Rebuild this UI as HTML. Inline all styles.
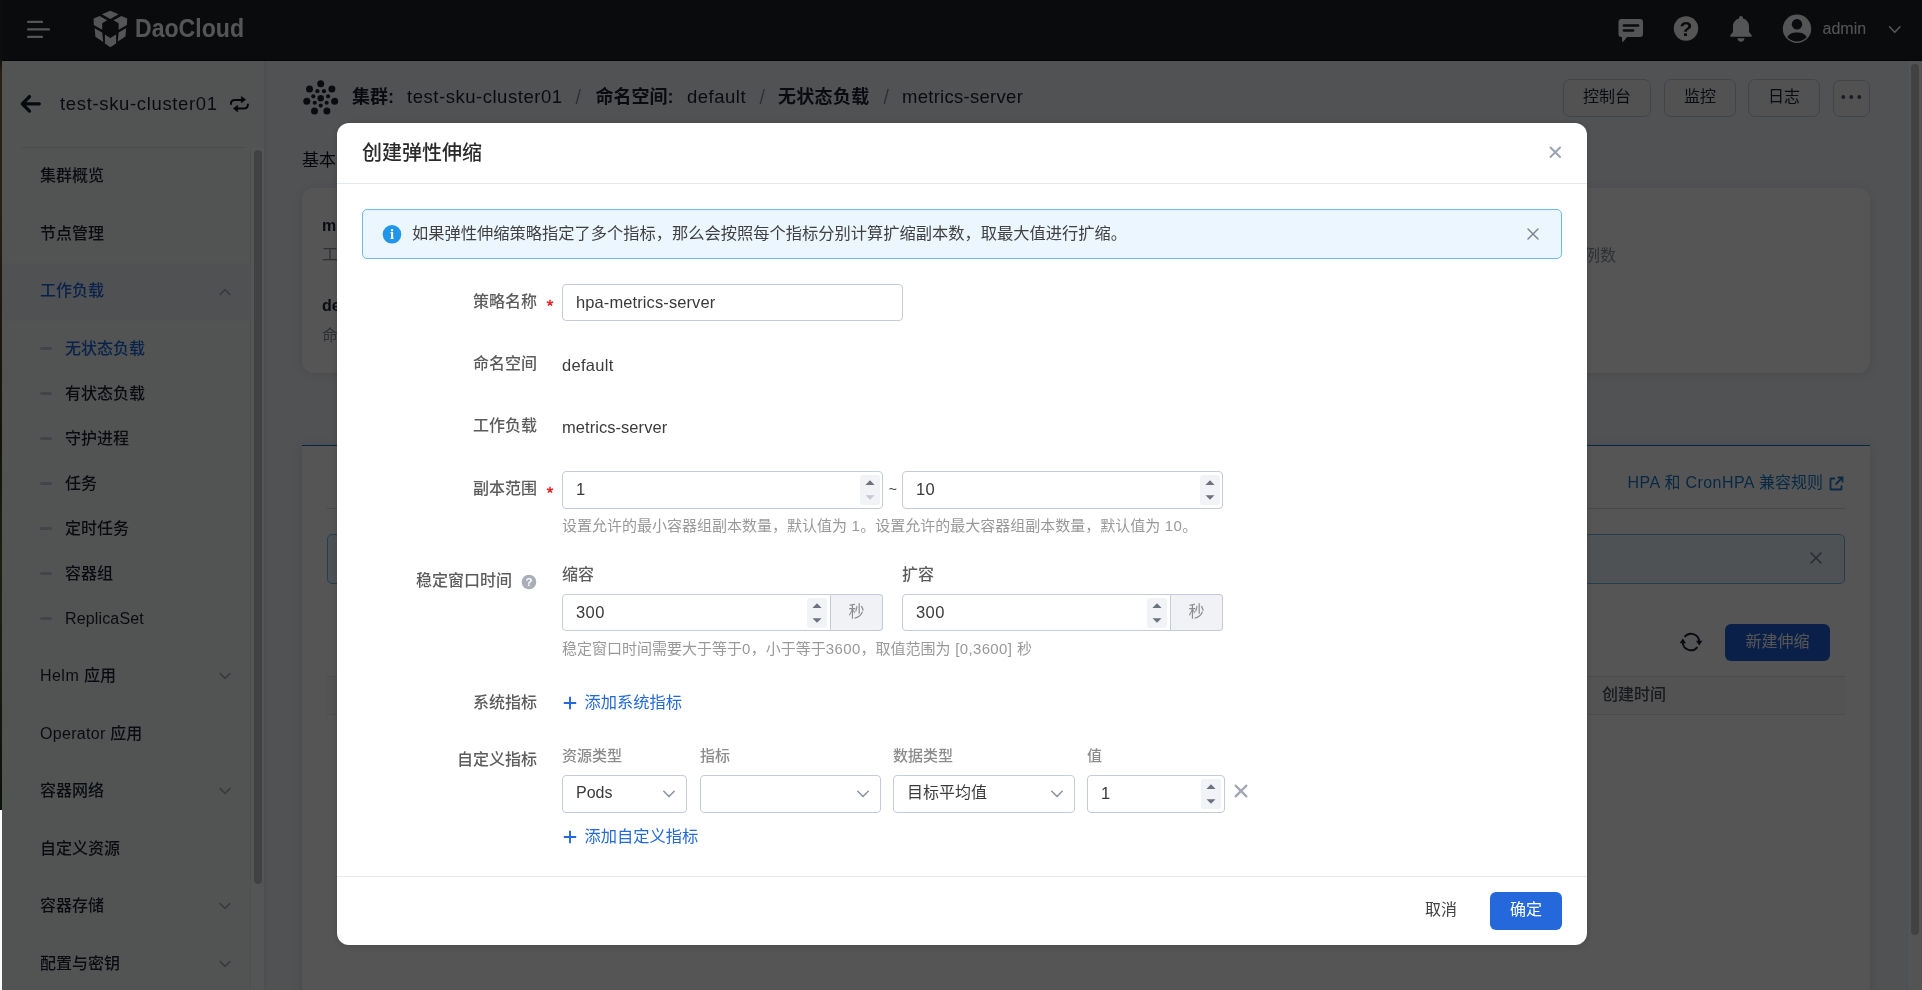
<!DOCTYPE html>
<html lang="zh-CN">
<head>
<meta charset="utf-8">
<title>创建弹性伸缩</title>
<style>
*{box-sizing:border-box;margin:0;padding:0}
html,body{width:1922px;height:990px;overflow:hidden;background:#fff}
body{font-family:"Liberation Sans","Noto Sans CJK SC",sans-serif;color:#1b2332;font-size:16px;position:relative}
.abs{position:absolute}
#hdr,#side,#content,#mc{will-change:transform}
#strip{position:absolute;left:0;top:0;width:2px;height:990px;background:#fff;z-index:50}
#strip i{position:absolute;left:0;top:0;width:2px;height:809.500px;background:linear-gradient(#0d0d0d 0,#0d0d0d 7%,#2a1f14 9%,#2a1d12 25%,#1c160f 40%,#141208 55%,#1a2010 70%,#141a0e 85%,#0a100a 100%)}
#page{position:absolute;left:0;top:0;width:1922px;height:990px;overflow:hidden;background:#f3f5fb}
/* header */
#hdr{position:absolute;left:0;top:0;width:1922px;height:60px;background:#1e2128;z-index:5;box-shadow:0 1px 0 #0b0c10}
/* sidebar */
#side{position:absolute;left:0;top:60px;width:264px;height:930px;background:#f7fcfa;box-shadow:1px 0 2px rgba(0,0,0,.07)}
.mi{position:absolute;margin-top:1px;left:40px;font-size:16px;font-weight:500;color:#1b2332;white-space:nowrap;line-height:24px}
.si{position:absolute;margin-top:1px;left:65px;font-size:16px;font-weight:500;color:#1b2332;white-space:nowrap;line-height:24px}
.dash{position:absolute;left:40px;width:12px;height:3px;background:#c5ccda;border-radius:1.500px;margin-top:-.500px}
.chev{position:absolute;left:218.500px;width:12px;height:8px}
/* overlay */
#mask{position:absolute;left:0;top:0;width:1922px;height:990px;background:rgba(0,0,0,.665);z-index:10}
/* modal */
#modal{position:absolute;left:337px;top:123px;width:1250px;height:822px;background:#fff;border-radius:12px;z-index:20;box-shadow:0 1px 8px rgba(0,0,0,.14)}
.lbl{position:absolute;font-size:16px;line-height:24px;color:#5c5c5c;font-weight:500;white-space:nowrap;text-align:right}
.val{position:absolute;font-size:16.5px;line-height:24px;color:#3c3c3c;white-space:nowrap}
.inp{position:absolute;height:37px;border:1px solid #c5cad9;border-radius:4px;background:#fff}
.inp span{position:absolute;left:13px;top:6px;font-size:16px;line-height:24px;color:#3a3a3a}
.ls{letter-spacing:.370px}
.inp span.n{font-size:16.500px;letter-spacing:.400px;top:5.300px}
.num span.n{top:4.800px}
.num{height:38px}
.sel{height:38px}
.sel span{top:4.500px}
.help{position:absolute;font-size:15px;line-height:20px;color:#999;white-space:nowrap}
.lnk{position:absolute;font-size:16.250px;line-height:24px;color:#2468d9;white-space:nowrap}
.req{position:absolute;color:#e02c2c;font-size:14px;line-height:24px}
</style>
</head>
<body>
<div id="strip"><i></i></div>
<div id="page">
<!--HEADER-->
<div id="hdr">
<svg class="abs" style="left:0;top:0" width="1922" height="60" viewBox="0 0 1922 60">
<g fill="#ffffff">
<rect x="27" y="20.700" width="16" height="2.400" rx="1.200"/><rect x="27" y="28.200" width="23" height="2.400" rx="1.200"/><rect x="27" y="35.700" width="16" height="2.400" rx="1.200"/>
<polygon points="110.25,10.8 118.6,14.3 110.25,18.9 101.9,14.3"/>
<polygon points="93.6,18.4 99.6,15.9 107.2,20.2 102.2,23.2 102.2,29.7 93.8,24.9"/>
<polygon points="127.2,18.4 121.4,15.9 113.5,20.2 118.6,23.2 118.6,29.7 126.9,24.9"/>
<polygon points="94.6,28.2 102.2,32.5 103.2,42.1 95.4,36.8"/>
<polygon points="126.2,28.2 118.6,32.5 117.8,41.6 125.4,36.6"/>
<polygon points="104.9,34.5 110.25,38.1 116.1,34.5 116.1,43.6 110.25,47.2 104.9,43.6"/>
</g>
<text x="135" y="37.2" font-family="Liberation Sans, sans-serif" font-weight="700" font-size="26.5" fill="#fff" textLength="109" lengthAdjust="spacingAndGlyphs">DaoCloud</text>
<!-- chat -->
<g fill="#fff">
<path d="M1621.5 19h18.5a3 3 0 0 1 3 3v12a3 3 0 0 1 -3 3h-13l-3.6 4.6c-.6.7-1.4.3-1.4-.5v-4.1h-.5a3 3 0 0 1 -3 -3v-12a3 3 0 0 1 3 -3z"/>
</g>
<g stroke="#1e2128" stroke-width="2.700" stroke-linecap="round"><line x1="1624" y1="25.5" x2="1638" y2="25.5"/><line x1="1624" y1="30.5" x2="1633" y2="30.5"/></g>
<!-- help -->
<circle cx="1686" cy="28.5" r="12.2" fill="#fff"/>
<text x="1686" y="36.200" text-anchor="middle" font-family="Liberation Sans, sans-serif" font-weight="700" font-size="21" fill="#1e2128">?</text>
<!-- bell -->
<path fill="#fff" d="M1741 16c1.1 0 2 .9 2 2v.6c3.700 .9 6 4.100 6 8v5.400l2.700 3.200c.5.600.1 1.500-.7 1.500h-20c-.8 0-1.200-.9-.7-1.500l2.700-3.200v-5.400c0-3.900 2.300-7.100 6-8v-.6c0-1.100.9-2 2-2zM1737.500 38.300h7c0 1.900-1.600 3.500-3.500 3.500s-3.500-1.600-3.500-3.500z"/>
<!-- avatar -->
<circle cx="1797" cy="28.800" r="14.200" fill="#fff"/>
<circle cx="1797" cy="24.300" r="5.200" fill="#1e2128"/>
<path fill="#1e2128" d="M1787.300 37.200c1.600-3.300 5.400-4.700 9.700-4.700s8.100 1.400 9.700 4.700c-2.400 2.600-5.900 4.200-9.700 4.200s-7.300-1.600-9.700-4.200z"/>
<text x="1822.500" y="34.300" font-family="Liberation Sans, sans-serif" font-size="16" fill="#fff">admin</text>
<polyline points="1889.500,26.800 1894.750,32.300 1900,26.800" fill="none" stroke="#fff" stroke-width="1.600" stroke-linecap="round" stroke-linejoin="round"/>
</svg>
</div>
<!--SIDEBAR-->
<div id="side">
<svg class="abs" style="left:0;top:0" width="264" height="100" viewBox="0 60 264 100"><g fill="none" stroke="#141b2b" stroke-width="3.300" stroke-linecap="round" stroke-linejoin="round"><path d="M39.300 103.800H22.600M29.500 96.600L22.300 103.800l7.200 7.300"/></g><g fill="none" stroke="#10141c" stroke-width="2" stroke-linecap="round" stroke-linejoin="round"><path d="M230.900 104C230.900 101 232.500 100 235 100H241.500M247.900 104.500C247.900 107.500 246.200 108.500 243.700 108.500H237.500"/></g><g fill="#10141c" stroke="#10141c" stroke-width=".600" stroke-linejoin="round"><polygon points="241.300,96.400 245.700,99.600 241.300,102.900"/><polygon points="237.700,105.200 233.400,108.500 237.700,111.900"/></g></svg>
<div class="abs" style="left:60px;top:32px;font-size:18.500px;line-height:24px;letter-spacing:.650px;color:#1b2332;white-space:nowrap">test-sku-cluster01</div>
<div class="abs" style="left:21px;top:87px;width:225px;height:1px;background:#e0e3ec"></div>
<div class="abs" style="left:0;top:203px;width:250px;height:58px;background:#eff3fa"></div>
<div class="mi" style="top:103px">集群概览</div>
<div class="mi" style="top:161px">节点管理</div>
<div class="mi" style="top:218px;color:#2068de">工作负载</div>
<svg class="chev" style="top:227.8px" viewBox="0 0 12 8"><polyline points="1.200,6.400 6,1.600 10.800,6.400" fill="none" stroke="#a6adba" stroke-width="1.600" stroke-linecap="round" stroke-linejoin="round"/></svg>
<div class="mi" style="top:603px"><span style="letter-spacing:.460px">Helm </span>应用</div>
<svg class="chev" style="top:612.3px" viewBox="0 0 12 8"><polyline points="1.200,1.600 6,6.400 10.800,1.600" fill="none" stroke="#a6adba" stroke-width="1.600" stroke-linecap="round" stroke-linejoin="round"/></svg>
<div class="mi" style="top:661px"><span style="letter-spacing:.300px">Operator </span>应用</div>
<div class="mi" style="top:718px">容器网络</div>
<svg class="chev" style="top:727.3px" viewBox="0 0 12 8"><polyline points="1.200,1.600 6,6.400 10.800,1.600" fill="none" stroke="#a6adba" stroke-width="1.600" stroke-linecap="round" stroke-linejoin="round"/></svg>
<div class="mi" style="top:776px">自定义资源</div>
<div class="mi" style="top:833px">容器存储</div>
<svg class="chev" style="top:842.3px" viewBox="0 0 12 8"><polyline points="1.200,1.600 6,6.400 10.800,1.600" fill="none" stroke="#a6adba" stroke-width="1.600" stroke-linecap="round" stroke-linejoin="round"/></svg>
<div class="mi" style="top:891px">配置与密钥</div>
<svg class="chev" style="top:899.8px" viewBox="0 0 12 8"><polyline points="1.200,1.600 6,6.400 10.800,1.600" fill="none" stroke="#a6adba" stroke-width="1.600" stroke-linecap="round" stroke-linejoin="round"/></svg>
<div class="dash" style="top:287px"></div>
<div class="si" style="top:276px;color:#2068de">无状态负载</div>
<div class="dash" style="top:332px"></div>
<div class="si" style="top:321px">有状态负载</div>
<div class="dash" style="top:377.3px"></div>
<div class="si" style="top:366.3px">守护进程</div>
<div class="dash" style="top:422px"></div>
<div class="si" style="top:411px">任务</div>
<div class="dash" style="top:467px"></div>
<div class="si" style="top:456px">定时任务</div>
<div class="dash" style="top:512.3px"></div>
<div class="si" style="top:501.3px">容器组</div>
<div class="dash" style="top:557px"></div>
<div class="si" style="top:546px"><span style="letter-spacing:.150px">ReplicaSet</span></div>
<div class="abs" style="left:250px;top:88px;width:14px;height:842px;background:#fefefe;border-left:1px solid #ececec"></div>
<div class="abs" style="left:254px;top:90px;width:8px;height:734px;border-radius:4px;background:#c4c4c4"></div>
</div>
<!--CONTENT-->
<div id="content" class="abs" style="left:0;top:0;width:1922px;height:990px;white-space:nowrap">
<svg class="abs" style="left:300px;top:76px" width="42" height="44" viewBox="300 76 42 44" fill="#1b2332"><circle cx="320.70" cy="83.70" r="3.500"/><circle cx="331.88" cy="89.08" r="3.500"/><circle cx="334.64" cy="101.18" r="3.500"/><circle cx="326.90" cy="110.88" r="3.500"/><circle cx="314.50" cy="110.88" r="3.500"/><circle cx="306.76" cy="101.18" r="3.500"/><circle cx="309.52" cy="89.08" r="3.500"/><circle cx="320.70" cy="105.60" r="2.100"/><circle cx="314.76" cy="102.74" r="2.100"/><circle cx="313.29" cy="96.31" r="2.100"/><circle cx="317.40" cy="91.15" r="2.100"/><circle cx="324.00" cy="91.15" r="2.100"/><circle cx="328.11" cy="96.31" r="2.100"/><circle cx="326.64" cy="102.74" r="2.100"/><circle cx="320.70" cy="98.30" r="3.200"/></svg>
<div class="abs" style="left:352px;top:85px;font-size:18px;line-height:24px;font-weight:700;letter-spacing:0px;color:#1b2332">集群:</div>
<div class="abs" style="left:407px;top:85px;font-size:18.5px;line-height:24px;letter-spacing:.53px;color:#1b2332">test-sku-cluster01</div>
<div class="abs" style="left:575.5px;top:85px;font-size:19.5px;line-height:24px;letter-spacing:0px;color:#8e94a2">/</div>
<div class="abs" style="left:595.5px;top:85px;font-size:18px;line-height:24px;font-weight:700;letter-spacing:0px;color:#1b2332">命名空间:</div>
<div class="abs" style="left:687px;top:85px;font-size:18.5px;line-height:24px;letter-spacing:0.5px;color:#1b2332">default</div>
<div class="abs" style="left:759.5px;top:85px;font-size:19.5px;line-height:24px;letter-spacing:0px;color:#8e94a2">/</div>
<div class="abs" style="left:778px;top:85px;font-size:18px;line-height:24px;font-weight:700;letter-spacing:0.3px;color:#1b2332">无状态负载</div>
<div class="abs" style="left:883.5px;top:85px;font-size:19.5px;line-height:24px;letter-spacing:0px;color:#8e94a2">/</div>
<div class="abs" style="left:902px;top:85px;font-size:18.5px;line-height:24px;letter-spacing:0.28px;color:#1b2332">metrics-server</div>
<div class="abs" style="left:1563px;top:79px;width:88px;height:38px;border:1px solid #c6cbd6;border-radius:7px;background:#f5f7fa;text-align:center;font-size:16px;line-height:34px;color:#1b2332">控制台</div>
<div class="abs" style="left:1664px;top:79px;width:72px;height:38px;border:1px solid #c6cbd6;border-radius:7px;background:#f5f7fa;text-align:center;font-size:16px;line-height:34px;color:#1b2332">监控</div>
<div class="abs" style="left:1748px;top:79px;width:72px;height:38px;border:1px solid #c6cbd6;border-radius:7px;background:#f5f7fa;text-align:center;font-size:16px;line-height:34px;color:#1b2332">日志</div>
<div class="abs" style="left:1833px;top:80px;width:37px;height:37px;border:1px solid #c6cbd6;border-radius:7px;background:#f5f7fa"></div>
<svg class="abs" style="left:1838px;top:92px" width="28" height="10" viewBox="0 0 28 10" fill="#4a5160"><circle cx="5.300" cy="5" r="1.900"/><circle cx="13.300" cy="5" r="1.900"/><circle cx="21.300" cy="5" r="1.900"/></svg>
<div class="abs" style="left:302px;top:149px;font-size:17px;line-height:24px;font-weight:400;color:#10141c">基本信息</div>
<div class="abs" style="left:302px;top:188px;width:1568px;height:185px;border-radius:12px;background:#fff;box-shadow:0 1px 10px rgba(0,0,0,.1)"></div>
<div class="abs" style="left:322px;top:214px;font-size:16px;line-height:24px;font-weight:700;color:#1b2332">metrics-server</div>
<div class="abs" style="left:322px;top:243px;font-size:16px;line-height:24px;color:#8d929c">工作负载名称</div>
<div class="abs" style="left:322px;top:294px;font-size:16px;line-height:24px;font-weight:700;color:#1b2332">default</div>
<div class="abs" style="left:322px;top:324px;font-size:16px;line-height:24px;color:#8d929c">命名空间</div>
<div class="abs" style="left:1568px;top:244px;font-size:16px;line-height:24px;color:#8d929c">实例数</div>
<div class="abs" style="left:302px;top:445px;width:1568px;height:560px;background:#fff;box-shadow:0 1px 10px rgba(0,0,0,.1)"></div>
<div class="abs" style="left:302px;top:444.500px;width:1568px;height:1.500px;background:#1473c8"></div>
<div class="abs" style="right:99px;top:471px;font-size:16px;line-height:24px;color:#1a7bd0"><span style="letter-spacing:.450px">HPA </span>和<span style="letter-spacing:.450px"> CronHPA </span>兼容规则</div>
<svg class="abs" style="left:1829px;top:476px" width="15" height="15" viewBox="0 0 15 15" fill="none" stroke="#1a7bd0" stroke-width="1.800" stroke-linecap="butt" stroke-linejoin="miter"><path d="M6 2.500H2.300a.800.800 0 0 0 -.800.800v9.400a.800.800 0 0 0 .800.800h9.400a.800.800 0 0 0 .800-.800V9.500"/><path d="M8.500 1.500h5v5M13.300 1.700L6.500 8.500"/></svg>
<div class="abs" style="left:327px;top:508px;width:1518px;height:1px;background:#d8dce5"></div>
<div class="abs" style="left:327px;top:534px;width:1518px;height:50px;border:1px solid #6cbaf3;border-radius:5px;background:#ebf6fe"></div>
<svg class="abs" style="left:1810px;top:552px" width="12" height="12" viewBox="0 0 12 12"><path d="M1 1l10 10M11 1L1 11" stroke="#7f8695" stroke-width="1.700" stroke-linecap="round"/></svg>
<svg class="abs" style="left:1679.100px;top:630.100px" width="24" height="24" viewBox="0 0 24 24" fill="none" stroke="#1b2332" stroke-width="1.900"><path d="M5.538 6.952A8.200 8.200 0 0 1 20.189 11.571M18.462 17.048A8.200 8.200 0 0 1 3.811 12.429"/><path d="M17 10.800h6.400l-3.200 4.600z" fill="#1b2332" stroke="none"/><path d="M.600 13.200h6.400L3.800 8.600z" fill="#1b2332" stroke="none"/></svg>
<div class="abs" style="left:1725px;top:624px;width:105px;height:37px;border-radius:6px;background:#2062dc;color:#fff;text-align:center;font-size:16px;line-height:35px">新建伸缩</div>
<div class="abs" style="left:327px;top:676px;width:1518px;height:39px;background:#f8f9fb;border-top:1px solid #e2e5ec;border-bottom:1px solid #e2e5ec"></div>
<div class="abs" style="left:1602px;top:683px;font-size:16px;line-height:24px;font-weight:500;color:#4a4f59">创建时间</div>
<div class="abs" style="left:1907px;top:60px;width:15px;height:930px;background:#fbfbfc;border-left:1px solid #eef0f3"></div>
<div class="abs" style="left:1911px;top:64px;width:8px;height:871px;border-radius:4px;background:#c6c6c6"></div>
</div>
<div id="mask"></div>
<!--MODAL-->
<div id="modal"></div>
<div id="mc" class="abs" style="left:0;top:0;width:1922px;height:990px;z-index:21;white-space:nowrap">
<div class="abs" style="left:362px;top:138.500px;font-size:20px;line-height:28px;font-weight:500;color:#2b2b2b;white-space:nowrap">创建弹性伸缩</div>
<svg class="abs" style="left:1549px;top:146px" width="13" height="13" viewBox="0 0 13 13"><path d="M1.500 1.500l9.500 9.500M11 1.500L1.500 11" stroke="#9aa1af" stroke-width="2" stroke-linecap="round"/></svg>
<div class="abs" style="left:337px;top:183px;width:1250px;height:1px;background:#e4e8f0"></div>
<div class="abs" style="left:362px;top:209px;width:1200px;height:50px;border:1px solid #6cbaf3;border-radius:5px;background:#ebf6fe"></div>
<svg class="abs" style="left:382px;top:224px" width="20" height="20" viewBox="0 0 20 20"><circle cx="10" cy="10.300" r="9.300" fill="#2196e8"/><text x="10" y="15.300" text-anchor="middle" font-family="Liberation Serif, serif" font-weight="700" font-size="14.500" fill="#fff">i</text></svg>
<div class="abs" style="left:412px;top:221px;font-size:16.250px;line-height:24px;color:#414141;white-space:nowrap">如果弹性伸缩策略指定了多个指标，那么会按照每个指标分别计算扩缩副本数，取最大值进行扩缩。</div>
<svg class="abs" style="left:1527px;top:228px" width="12" height="12" viewBox="0 0 12 12"><path d="M1 1l10 10M11 1L1 11" stroke="#7f8695" stroke-width="1.500" stroke-linecap="round"/></svg>
<div class="lbl" style="right:1385px;top:289.5px">策略名称</div>
<svg class="abs" style="left:544.5px;top:297.8px" width="10" height="10" viewBox="0 0 10 10"><path d="M5 5l0.00 -3.30M5 5l3.14 -1.02M5 5l1.94 2.67M5 5l-1.94 2.67M5 5l-3.14 -1.02" stroke="#e32626" stroke-width="1.500" stroke-linecap="butt" fill="none"/></svg>
<div class="inp" style="left:562px;top:284px;width:341px"><span style="top:5px;font-size:16.500px;letter-spacing:.1px">hpa-metrics-server</span></div>
<div class="lbl" style="right:1385px;top:351.5px">命名空间</div>
<div class="val" style="left:562px;top:352.500px;letter-spacing:.3px">default</div>
<div class="lbl" style="right:1385px;top:413.5px">工作负载</div>
<div class="val" style="left:562px;top:414.500px;letter-spacing:.05px">metrics-server</div>
<div class="lbl" style="right:1385px;top:476.5px">副本范围</div>
<svg class="abs" style="left:544.5px;top:484.7px" width="10" height="10" viewBox="0 0 10 10"><path d="M5 5l0.00 -3.30M5 5l3.14 -1.02M5 5l1.94 2.67M5 5l-1.94 2.67M5 5l-3.14 -1.02" stroke="#e32626" stroke-width="1.500" stroke-linecap="butt" fill="none"/></svg>
<div class="inp num" style="left:562px;top:471px;width:321px"><span class="n">1</span><svg class="abs" style="right:2px;top:3px" width="20" height="30" viewBox="0 0 20 30"><rect width="20" height="30" rx="3" fill="#f1f3f7"/><path d="M5.400 10h9.200L10 5.300z" fill="#6b7380"/><path d="M5.500 20.200h9L10 24.800z" fill="#c3c8d6"/></svg></div>
<div class="abs" style="left:888.800px;top:477px;font-size:14px;line-height:24px;color:#3a3a3a">~</div>
<div class="inp num" style="left:902px;top:471px;width:321px"><span class="n">10</span><svg class="abs" style="right:2px;top:3px" width="20" height="30" viewBox="0 0 20 30"><rect width="20" height="30" rx="3" fill="#f1f3f7"/><path d="M5.400 10h9.200L10 5.300z" fill="#6b7380"/><path d="M5.500 20.200h9L10 24.800z" fill="#6b7380"/></svg></div>
<div class="help" style="left:562px;top:516px">设置允许的最小容器组副本数量，默认值为<span class="ls"> 1</span>。设置允许的最大容器组副本数量，默认值为<span class="ls"> 10</span>。</div>
<div class="lbl" style="right:1410px;top:569px">稳定窗口时间</div>
<svg class="abs" style="left:520.800px;top:573.800px" width="16" height="16" viewBox="0 0 16 16"><circle cx="8" cy="8" r="7.300" fill="#a9aeb9"/><text x="8" y="12.200" text-anchor="middle" font-family="Liberation Sans, sans-serif" font-weight="700" font-size="11.500" fill="#fff">?</text></svg>
<div class="abs" style="left:562px;top:563px;font-size:16px;line-height:24px;font-weight:500;color:#5c5c5c">缩容</div>
<div class="abs" style="left:902px;top:563px;font-size:16px;line-height:24px;font-weight:500;color:#5c5c5c">扩容</div>
<div class="inp" style="left:562px;top:594px;width:269px;border-radius:4px 0 0 4px"><span class="n">300</span><svg class="abs" style="right:3px;top:3px" width="20" height="30" viewBox="0 0 20 30"><rect width="20" height="30" rx="3" fill="#f1f3f7"/><path d="M5.400 10h9.200L10 5.300z" fill="#6b7380"/><path d="M5.500 20.200h9L10 24.800z" fill="#6b7380"/></svg></div><div class="abs" style="left:831px;top:594px;width:52px;height:37px;border:1px solid #c5cad9;border-left:none;border-radius:0 4px 4px 0;background:#f0f2f6;text-align:center;font-size:16px;line-height:33px;color:#8c8c8c">秒</div>
<div class="inp" style="left:902px;top:594px;width:269px;border-radius:4px 0 0 4px"><span class="n">300</span><svg class="abs" style="right:3px;top:3px" width="20" height="30" viewBox="0 0 20 30"><rect width="20" height="30" rx="3" fill="#f1f3f7"/><path d="M5.400 10h9.200L10 5.300z" fill="#6b7380"/><path d="M5.500 20.200h9L10 24.800z" fill="#6b7380"/></svg></div><div class="abs" style="left:1171px;top:594px;width:52px;height:37px;border:1px solid #c5cad9;border-left:none;border-radius:0 4px 4px 0;background:#f0f2f6;text-align:center;font-size:16px;line-height:33px;color:#8c8c8c">秒</div>
<div class="help" style="left:562px;top:638.700px">稳定窗口时间需要大于等于<span class="ls">0</span>，小于等于<span class="ls">3600</span>，取值范围为<span class="ls"> [0,3600] </span>秒</div>
<div class="lbl" style="right:1385px;top:691.300px">系统指标</div>
<svg class="abs" style="left:563.200px;top:696px" width="14" height="14" viewBox="0 0 14 14"><path d="M7 .800v12.400M.800 7h12.400" stroke="#2468d9" stroke-width="1.900" stroke-linecap="butt"/></svg>
<div class="lnk" style="left:584.500px;top:690.300px">添加系统指标</div>
<div class="lbl" style="right:1385px;top:748px">自定义指标</div>
<div class="abs" style="left:562px;top:746.300px;font-size:15px;line-height:20px;font-weight:500;color:#8c8c8c;white-space:nowrap">资源类型</div>
<div class="abs" style="left:700px;top:746.300px;font-size:15px;line-height:20px;font-weight:500;color:#8c8c8c;white-space:nowrap">指标</div>
<div class="abs" style="left:893px;top:746.300px;font-size:15px;line-height:20px;font-weight:500;color:#8c8c8c;white-space:nowrap">数据类型</div>
<div class="abs" style="left:1087px;top:746.300px;font-size:15px;line-height:20px;font-weight:500;color:#8c8c8c;white-space:nowrap">值</div>
<div class="inp sel" style="left:562px;top:775px;width:125px"><span>Pods</span><svg class="abs" style="right:11.500px;top:14px" width="12" height="8" viewBox="0 0 12 8"><polyline points="0.800,1.200 6,6.600 11.200,1.200" fill="none" stroke="#8a93a3" stroke-width="1.500" stroke-linecap="round" stroke-linejoin="round"/></svg></div>
<div class="inp sel" style="left:700px;top:775px;width:181px"><svg class="abs" style="right:11.500px;top:14px" width="12" height="8" viewBox="0 0 12 8"><polyline points="0.800,1.200 6,6.600 11.200,1.200" fill="none" stroke="#8a93a3" stroke-width="1.500" stroke-linecap="round" stroke-linejoin="round"/></svg></div>
<div class="inp sel" style="left:893px;top:775px;width:182px"><span>目标平均值</span><svg class="abs" style="right:11.500px;top:14px" width="12" height="8" viewBox="0 0 12 8"><polyline points="0.800,1.200 6,6.600 11.200,1.200" fill="none" stroke="#8a93a3" stroke-width="1.500" stroke-linecap="round" stroke-linejoin="round"/></svg></div>
<div class="inp num" style="left:1087px;top:775px;width:138px"><span class="n">1</span><svg class="abs" style="right:3px;top:3px" width="20" height="30" viewBox="0 0 20 30"><rect width="20" height="30" rx="3" fill="#f1f3f7"/><path d="M5.400 10h9.200L10 5.300z" fill="#6b7380"/><path d="M5.500 20.200h9L10 24.800z" fill="#6b7380"/></svg></div>
<svg class="abs" style="left:1233.800px;top:784.300px" width="14" height="14" viewBox="0 0 14 14"><path d="M1.600 1.600l10.800 10.800M12.400 1.600L1.600 12.400" stroke="#a0a7b4" stroke-width="2.200" stroke-linecap="round"/></svg>
<svg class="abs" style="left:563.200px;top:830px" width="14" height="14" viewBox="0 0 14 14"><path d="M7 .800v12.400M.800 7h12.400" stroke="#2468d9" stroke-width="1.900" stroke-linecap="butt"/></svg>
<div class="lnk" style="left:584.500px;top:824px">添加自定义指标</div>
<div class="abs" style="left:337px;top:876px;width:1250px;height:1px;background:#e4e8f0"></div>
<div class="abs" style="left:1425px;top:898px;font-size:16px;line-height:24px;color:#414141;white-space:nowrap">取消</div>
<div class="abs" style="left:1490px;top:892px;width:72px;height:38px;border-radius:6px;background:#2468db;color:#fff;text-align:center;font-size:16px;line-height:35px">确定</div>
</div>
</div>
</body>
</html>
